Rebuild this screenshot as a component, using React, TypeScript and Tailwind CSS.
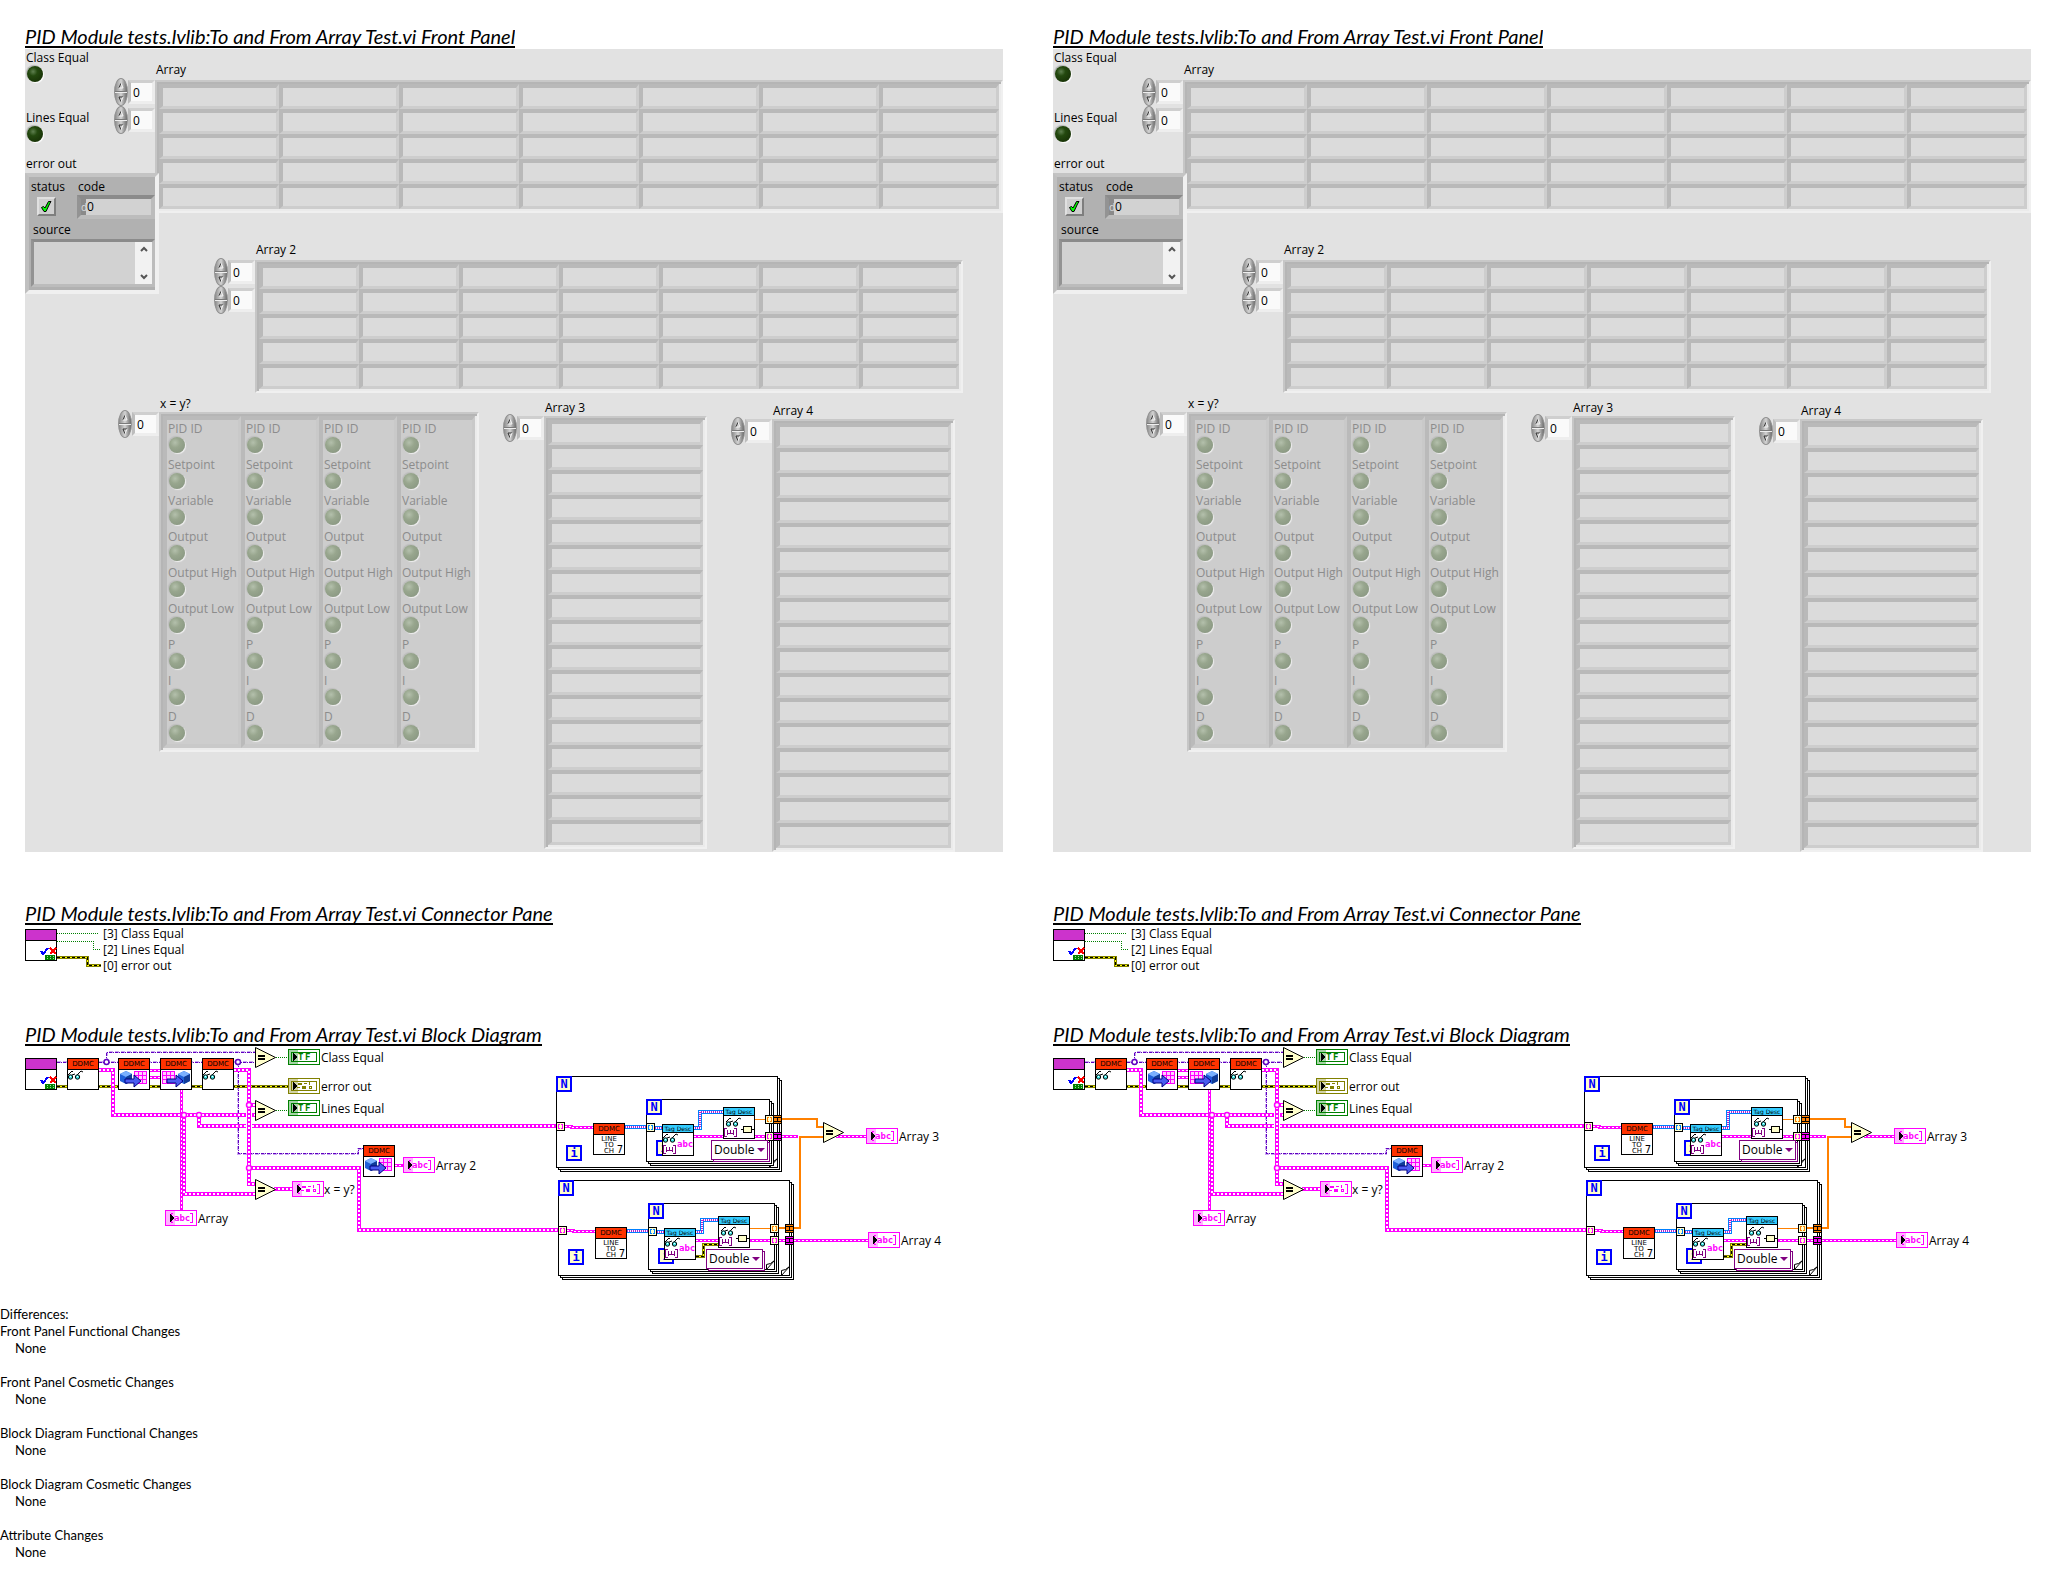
import React from "react";

const FIELDS = ["PID ID", "Setpoint", "Variable", "Output", "Output High", "Output Low", "P", "I", "D"];

const CHANGES = [
  "Front Panel Functional Changes",
  "Front Panel Cosmetic Changes",
  "Block Diagram Functional Changes",
  "Block Diagram Cosmetic Changes",
  "Attribute Changes",
];

const LABEL_FONT = '"Open Sans", "Noto Sans", sans-serif';
const PIXEL_FONT = '"DejaVu Sans", sans-serif';
const MONO_FONT = '"DejaVu Sans Mono", monospace';

function Title({ children }: { children: React.ReactNode }) {
  return (
    <h2 className="block h-6 w-fit overflow-hidden border-b-2 border-black font-['Lato',sans-serif] text-xl leading-[25px] whitespace-nowrap text-black italic">
      {children}
    </h2>
  );
}

/* ---------- Front panel ---------- */

function Led({ dim = false }: { dim?: boolean }) {
  return (
    <span
      className={
        dim
          ? "ml-px block size-4 rounded-full bg-[radial-gradient(circle_at_38%_35%,#b4c0ac_0%,#98a68e_35%,#8c9a84_75%,#a3a89f_100%)] shadow-[1px_1px_1px_#f0f0f0,-1px_-1px_1px_#bcbcbc]"
          : "ml-px block size-4 rounded-full bg-[radial-gradient(circle_at_38%_35%,#5f8050_0%,#24490f_30%,#1a3608_70%,#4a5a42_100%)] shadow-[1px_1px_1px_#ffffff,-1px_-1px_1px_#b4b4b4]"
      }
    />
  );
}

function LabelledLed({ label, dim = false }: { label: string; dim?: boolean }) {
  return (
    <div className="pl-px">
      <div className={dim ? "h-4 leading-4 whitespace-nowrap text-[#8c8c8c]" : "h-4 leading-4 whitespace-nowrap"}>{label}</div>
      <Led dim={dim} />
    </div>
  );
}

function IndexControl({ name }: { name: string }) {
  return (
    <div className="flex h-7 w-[41px] items-center">
      <div className="flex h-7 w-3.5 flex-col overflow-hidden rounded-[50%] border border-[#909090] bg-linear-to-r from-[#8c8c8c] via-[#d4d4d4] to-[#6c6c6c]">
        <button aria-label={`Increase ${name}`} className="flex h-[13px] items-center justify-center border-b border-[#7a7a7a]">
          <svg width="6" height="7" viewBox="0 0 6 7" fill="none">
            <path d="M1 6 3 1" stroke="#333" />
            <path d="M3 1 5 6H1" stroke="#f4f4f4" />
          </svg>
        </button>
        <button aria-label={`Decrease ${name}`} className="flex h-[13px] items-center justify-center border-t border-[#efefef]">
          <svg width="6" height="7" viewBox="0 0 6 7" fill="none">
            <path d="M3 6 1 1H5" stroke="#333" />
            <path d="M5 1 3 6" stroke="#f4f4f4" />
          </svg>
        </button>
      </div>
      <input
        aria-label={name}
        defaultValue="0"
        className="h-6 w-[27px] border-[3px] border-t-[#cfcfcf] border-r-[#ececec] border-b-[#eeeeee] border-l-[#bdbdbd] bg-[#fafafa] pl-0.5 text-xs leading-4 text-black outline-none"
      />
    </div>
  );
}

const FRAME =
  "border-2 border-t-[#c8c8c8] border-l-[#c6c6c6] border-r-[#f0f0f0] border-b-[#f0f0f0] p-0.5 shadow-[inset_2px_2px_0_#b5b5b5,inset_-2px_-2px_0_#ebebeb]";

function CellTable({ rows, wide, label }: { rows: number; wide?: boolean; label: string }) {
  const cols = wide ? 7 : 1;
  return (
    <div className={FRAME}>
      <table className="block" aria-label={label}>
        <tbody className={wide ? "grid grid-cols-7" : "grid grid-cols-1"}>
          {Array.from({ length: rows }, (_, r) => (
            <tr key={r} className="contents">
              {Array.from({ length: cols }, (_, c) => (
                <td
                  key={c}
                  className="block h-[25px] border-4 border-r-[3px] border-b-[3px] border-t-[#b9b9b9] border-r-[#cdcdcd] border-b-[#cdcdcd] border-l-[#b9b9b9] bg-[#dbdbdb] p-0"
                />
              ))}
            </tr>
          ))}
        </tbody>
      </table>
    </div>
  );
}

function IndexedArray({
  label,
  indices = 1,
  tight = false,
  className = "",
  bodyClass = "",
  children,
}: {
  label: string;
  indices?: number;
  tight?: boolean;
  className?: string;
  bodyClass?: string;
  children: React.ReactNode;
}) {
  return (
    <section className={`flex ${className}`}>
      <div className="mt-4 shrink-0">
        {Array.from({ length: indices }, (_, i) => (
          <IndexControl key={i} name={`${label} index ${i + 1}`} />
        ))}
      </div>
      <div className={bodyClass}>
        <div className={tight ? "mt-0.5 h-4 pl-px leading-4 whitespace-nowrap" : "mb-0.5 h-4 pl-px leading-4 whitespace-nowrap"}>
          {label}
        </div>
        {children}
      </div>
    </section>
  );
}

function ErrorCluster() {
  return (
    <div className="h-[121px] border-4 border-t-[#c4c4c4] border-r-[#f0f0f0] border-b-[#f0f0f0] border-l-[#c0c0c0] bg-[#b1b1b1] px-0.5 pt-0.5">
      <div className="flex">
        <div className="w-[46px]">
          <div className="h-[18px] leading-4">status</div>
          <div className="ml-1.5 flex size-[19px] items-center justify-center border-2 border-t-[#e0e0e0] border-r-[#7e7e7e] border-b-[#7e7e7e] border-l-[#e0e0e0] bg-[#cfcfcf]">
            <svg width="13" height="13" viewBox="0 0 13 13" role="img" aria-label="No error">
              <path d="M1.500 7.500 3.500 6.500 5 8 8.500 1.500 11 1.500 9.500 4 6 11.500 4 11.500z" fill="#00ff00" stroke="#000" strokeWidth="1" />
            </svg>
          </div>
        </div>
        <div className="-mr-0.5 flex-1">
          <div className="h-4 pl-px leading-4">code</div>
          <div className="flex h-6 items-stretch border-4 border-t-[#8b8b8b] border-r-[#bcbcbc] border-b-[#bcbcbc] border-l-[#939393] bg-[#d2d2d2] leading-4">
            <span className="w-[5px] overflow-hidden bg-[#8a8a8a] text-[10px] text-[#dddddd]">d</span>
            <span className="pl-px text-xs leading-4">0</span>
          </div>
        </div>
      </div>
      <div className="mt-[3px] h-[17px] pl-0.5 leading-4">source</div>
      <div className="-mr-0.5 flex h-12 justify-end border-[3px] border-t-[#8b8b8b] border-r-[#bcbcbc] border-b-[#bcbcbc] border-l-[#939393] bg-[#d2d2d2]">
        <div className="flex w-[17px] flex-col items-center justify-between bg-[#f2f2f2] py-1">
          <svg width="8" height="6" viewBox="0 0 8 6" fill="none" stroke="#555" strokeWidth="2">
            <path d="M1 5 4 2 7 5" />
          </svg>
          <svg width="8" height="6" viewBox="0 0 8 6" fill="none" stroke="#555" strokeWidth="2">
            <path d="M1 1 4 4 7 1" />
          </svg>
        </div>
      </div>
    </div>
  );
}

function FrontPanel() {
  return (
    <div className="mt-px mb-[49px] bg-[#e2e2e2]">
      <div className="flex items-start">
        <div className="relative z-10 w-[134px] shrink-0 pt-px">
          <div className="flex w-[70px] flex-col gap-7">
            <LabelledLed label="Class Equal" />
            <LabelledLed label="Lines Equal" />
          </div>
          <div className="mt-3.5 mb-px h-4 pl-px leading-4">error out</div>
          <ErrorCluster />
        </div>
        <div className="-ml-[45px] flex min-w-0 flex-1 flex-col gap-[29px] pt-[13px]">
          <IndexedArray label="Array" indices={2} bodyClass="min-w-0 flex-1">
            <CellTable rows={5} wide label="Array" />
          </IndexedArray>
          <IndexedArray label="Array 2" indices={2} className="mr-10 ml-[100px]" bodyClass="min-w-0 flex-1">
            <CellTable rows={5} wide label="Array 2" />
          </IndexedArray>
        </div>
      </div>
      <div className="flex items-start gap-6 pl-[93px]">
        <IndexedArray label="x = y?" tight className="pt-px" bodyClass="w-80">
          <div className={`grid grid-cols-4 ${FRAME}`}>
            {[0, 1, 2, 3].map((n) => (
              <div
                key={n}
                className="h-[332px] border-4 border-r-[3px] border-t-[#bababa] border-r-[#c9c9c9] border-b-[#c9c9c9] border-l-[#bababa] bg-[#cdcdcd] pt-px"
              >
                <div className="flex flex-col gap-1">
                  {FIELDS.map((f) => (
                    <LabelledLed key={f} label={f} dim />
                  ))}
                </div>
              </div>
            ))}
          </div>
        </IndexedArray>
        <IndexedArray label="Array 3" tight className="pt-[5px]" bodyClass="w-[163px]">
          <CellTable rows={17} label="Array 3" />
        </IndexedArray>
        <IndexedArray label="Array 4" tight className="pt-2" bodyClass="w-[183px]">
          <CellTable rows={17} label="Array 4" />
        </IndexedArray>
      </div>
    </div>
  );
}

/* ---------- Shared diagram drawing parts ---------- */

function TestIcon({ x, y }: { x: number; y: number }) {
  return (
    <g>
      <rect x={x + 0.5} y={y + 0.5} width="31" height="31" fill="#fff" stroke="#000" />
      <rect x={x + 1} y={y + 1} width="30" height="10" fill="#cc33cc" />
      <path d={`M${x} ${y + 11.5}h32`} stroke="#000" />
      <path d={`M${x + 16} ${y + 22}l2 3 5-6`} fill="none" stroke="#0000ff" strokeWidth="2" />
      <path d={`M${x + 25} ${y + 19}l6 6m0-6l-6 6`} stroke="#ff0000" strokeWidth="2" />
      <rect x={x + 20} y={y + 26} width="10" height="5" fill="#008000" />
      <path d={`M${x + 22} ${y + 27.5}h7M${x + 22} ${y + 29.5}h7`} stroke="#9adf9a" strokeDasharray="1 2" />
    </g>
  );
}

function ErrorWire({ d }: { d: string }) {
  return (
    <g fill="none">
      <path d={d} stroke="#808000" strokeWidth="3" />
      <path d={d} stroke="#ffff00" strokeWidth="1" />
      <path d={d} stroke="#000000" strokeWidth="1" strokeDasharray="3 2" />
    </g>
  );
}

function ClusterWire({ d }: { d: string }) {
  return (
    <g fill="none">
      <path d={d} stroke="#ff00ff" strokeWidth="4" />
      <path d={d} stroke="#ffffff" strokeWidth="2" strokeDasharray="2 2" />
    </g>
  );
}

function StringWire({ d }: { d: string }) {
  return (
    <g fill="none">
      <path d={d} stroke="#ff00ff" strokeWidth="3" />
      <path d={d} stroke="#ffffff" strokeWidth="1" strokeDasharray="2 2" />
    </g>
  );
}

function ClassWire({ d }: { d: string }) {
  return (
    <g fill="none">
      <path d={d} stroke="#c9a8f0" strokeWidth="2" strokeDasharray="4 2" />
      <path d={d} stroke="#6000c0" strokeWidth="1" strokeDasharray="3 1 1 1" />
    </g>
  );
}

function TagWire({ d }: { d: string }) {
  return (
    <g fill="none">
      <path d={d} stroke="#0080ff" strokeWidth="4" />
      <path d={d} stroke="#ffffff" strokeWidth="2" />
      <path d={d} stroke="#b020d0" strokeWidth="2" strokeDasharray="1 1" />
    </g>
  );
}

function Glasses({ x, y }: { x: number; y: number }) {
  return (
    <g fill="none" stroke="#000" shapeRendering="auto">
      <path d={`M${x} ${y + 6}l4-4 1 1M${x + 9} ${y + 6}l4-4 2 1M${x + 4} ${y + 6}l3-1`} />
      <circle cx={x + 2.5} cy={y + 8} r="2.2" fill="#40e0e0" />
      <circle cx={x + 9.5} cy={y + 8} r="2.2" fill="#40e0e0" />
      <path d={`M${x + 2} ${y + 7.500}h1M${x + 9} ${y + 7.500}h1`} stroke="#fff" />
    </g>
  );
}

function Node({ x, y, title, tag = false, children }: { x: number; y: number; title: string; tag?: boolean; children?: React.ReactNode }) {
  const head = tag ? 8 : 11;
  return (
    <g>
      <rect x={x + 0.5} y={y + 0.5} width="31" height="31" fill="#fff" stroke="#000" />
      <rect x={x + 1} y={y + 1} width="30" height={head - 1} fill={tag ? "#33ccff" : "#ff3300"} />
      <path d={`M${x} ${y + head + 0.5}h32`} stroke="#000" />
      <text x={x + 16} y={y + (tag ? 7 : 8)} textAnchor="middle" fontFamily={PIXEL_FONT} fontSize={tag ? 6 : 7} fill="#000">
        {title}
      </text>
      {children}
    </g>
  );
}

function Cube({ x, y }: { x: number; y: number }) {
  return (
    <g shapeRendering="auto">
      <path d={`M${x} ${y + 3}l6-3 6 3v7l-6 3-6-3z`} fill="#2060d8" />
      <path d={`M${x} ${y + 3}l6-3 6 3-6 3z`} fill="#7ab0ff" />
      <path d={`M${x + 6} ${y + 6}l6-3v7l-6 3z`} fill="#103c98" />
    </g>
  );
}

function GridIcon({ x, y }: { x: number; y: number }) {
  return (
    <path
      d={`M${x + 0.5} ${y + 0.5}h12v12h-12zM${x + 4.5} ${y}v13M${x + 8.5} ${y}v13M${x} ${y + 4.5}h13M${x} ${y + 8.5}h13`}
      fill="#ffccff"
      stroke="#ff00ff"
    />
  );
}

function BlueArrow({ x, y }: { x: number; y: number }) {
  return (
    <path
      d={`M${x} ${y + 4}h9v-4l7 6-7 6v-4h-9z`}
      fill="#4a5cf0"
      stroke="#000080"
      shapeRendering="auto"
    />
  );
}

function ToArrayNode({ x, y }: { x: number; y: number }) {
  return (
    <Node x={x} y={y} title="DDMC">
      <Cube x={x + 2} y={y + 13} />
      <GridIcon x={x + 16} y={y + 13} />
      <BlueArrow x={x + 7} y={y + 17} />
    </Node>
  );
}

function FromArrayNode({ x, y }: { x: number; y: number }) {
  return (
    <Node x={x} y={y} title="DDMC">
      <GridIcon x={x + 2} y={y + 13} />
      <Cube x={x + 18} y={y + 13} />
      <BlueArrow x={x + 7} y={y + 17} />
    </Node>
  );
}

function LineNode({ x, y }: { x: number; y: number }) {
  return (
    <Node x={x} y={y} title="DDMC">
      <g fontFamily={PIXEL_FONT} fontSize="7" textAnchor="middle" fill="#000">
        <text x={x + 16} y={y + 18}>LINE</text>
        <text x={x + 16} y={y + 24}>TO</text>
        <text x={x + 16} y={y + 30}>CH</text>
        <text x={x + 27} y={y + 30} fontSize="10">7</text>
      </g>
    </Node>
  );
}

function ArrayMark({ x, y }: { x: number; y: number }) {
  return (
    <path
      d={`M${x + 3} ${y + 0.5}h-2.500v8h2.500M${x + 10} ${y + 0.5}h2.500v8h-2.500M${x + 3.5} ${y + 2}v5M${x + 9.5} ${y + 2}v5M${x + 3} ${y + 5.5}h7M${x + 6.5} ${y + 2}v4`}
      fill="none"
      stroke="#800080"
    />
  );
}

function TagTextNode({ x, y }: { x: number; y: number }) {
  return (
    <Node x={x} y={y} title="Tag Desc" tag>
      <Glasses x={x + 1} y={y + 8} />
      <text x={x + 15} y={y + 23} fontFamily={MONO_FONT} fontSize="9" fontWeight="bold" fill="#ff00ff">
        abc
      </text>
      <ArrayMark x={x + 1} y={y + 21} />
    </Node>
  );
}

function TagValueNode({ x, y }: { x: number; y: number }) {
  return (
    <Node x={x} y={y} title="Tag Desc" tag>
      <Glasses x={x + 3} y={y + 9} />
      <ArrayMark x={x + 1} y={y + 21} />
      <rect x={x + 20.5} y={y + 19.5} width="8" height="6" fill="#ffffcc" stroke="#000" />
      <path d={`M${x + 18} ${y + 22.5}h2M${x + 29} ${y + 22.5}h2`} stroke="#000" />
    </Node>
  );
}

function Equals({ x, y }: { x: number; y: number }) {
  return (
    <g>
      <path d={`M${x + 0.5} ${y + 0.5}v20l20-10z`} fill="#ffffcc" stroke="#000" shapeRendering="auto" />
      <path d={`M${x + 3} ${y + 9}h7M${x + 3} ${y + 12}h7`} stroke="#000" strokeWidth="2" />
    </g>
  );
}

function Terminal({ x, y, kind }: { x: number; y: number; kind: "bool" | "error" | "text" | "cluster" }) {
  const stroke = kind === "bool" ? "#008000" : kind === "error" ? "#808000" : "#ff00ff";
  const tint = kind === "bool" ? "#a6d3a6" : kind === "error" ? "#d3d3a6" : "#ffb3ff";
  const boxed = kind === "bool" || kind === "error";
  return (
    <g>
      <rect x={x + 0.5} y={y + 0.5} width="31" height="15" fill="#fff" stroke={stroke} />
      <rect x={x + 1} y={y + 1} width="9" height="14" fill={tint} />
      {boxed && <rect x={x + 3.5} y={y + 3.5} width="25" height="9" fill="none" stroke={stroke} />}
      {kind === "bool" && (
        <g fontFamily={MONO_FONT} fontSize="9" fontWeight="bold" fill={stroke}>
          <text x={x + 10} y={y + 11}>T</text>
          <text x={x + 17} y={y + 11}>F</text>
        </g>
      )}
      {kind === "text" && (
        <text x={x + 9} y={y + 11} fontFamily={MONO_FONT} fontSize="9" fontWeight="bold" fill={stroke}>
          abc
        </text>
      )}
      {(kind === "error" || kind === "cluster") && (
        <g fill={stroke}>
          <rect x={x + 10} y={y + 5} width="4" height="2" />
          <rect x={x + 9} y={y + 9} width="3" height="1" />
          <rect x={x + 14} y={y + 8} width="4" height="3" />
          <rect x={x + 16} y={y + 5} width="3" height="1" />
          <rect x={x + 21} y={y + 4} width="1" height="3" />
          <rect x={x + 21.5} y={y + 8.5} width="2" height="2" fill="none" stroke={stroke} />
        </g>
      )}
      {!boxed && <path d={`M${x + 8} ${y + 3.5}h-2v9h2M${x + 25} ${y + 3.5}h2v9h-2`} fill="none" stroke={stroke} />}
      <path d={`M${x + 5} ${y + 4}l4 4-4 4z`} fill="#000" />
    </g>
  );
}

function Letter({ x, y, children }: { x: number; y: number; children: string }) {
  return (
    <g>
      <rect x={x + 1} y={y + 1} width="14" height="14" fill="#ffffcc" stroke="#0000ff" strokeWidth="2" />
      <text x={x + 8} y={y + 12} textAnchor="middle" fontFamily={MONO_FONT} fontSize="12" fontWeight="bold" fill="#0000ff" stroke="none">
        {children}
      </text>
    </g>
  );
}

function Loop({ x, y, w, h }: { x: number; y: number; w: number; h: number }) {
  return (
    <g stroke="#000" fill="#fff">
      <rect x={x + 4.5} y={y + 4.5} width={w} height={h} />
      <rect x={x + 2.5} y={y + 2.5} width={w} height={h} />
      <rect x={x + 0.5} y={y + 0.5} width={w} height={h} />
      <path d={`M${x + w - 7.5} ${y + h + 0.5}v-5l4-1 4-3z`} shapeRendering="auto" />
      <Letter x={x} y={y}>N</Letter>
    </g>
  );
}

function Tunnel({ x, y, color, solid = false }: { x: number; y: number; color: string; solid?: boolean }) {
  return (
    <g>
      <rect x={x + 0.5} y={y + 0.5} width="8" height="8" fill={solid ? color : "#ffffcc"} stroke="#000" />
      {solid ? (
        <path d={`M${x} ${y + 2.5}h9M${x} ${y + 6.5}h9M${x + 4.5} ${y + 2}v5`} stroke="#000" />
      ) : (
        <path d={`M${x + 4} ${y + 2.5}h-1.500v4h1.500M${x + 5} ${y + 2.5}h1.500v4h-1.500`} fill="none" stroke={color} />
      )}
    </g>
  );
}

function Junction({ x, y, color = "#ff00ff" }: { x: number; y: number; color?: string }) {
  return <circle cx={x} cy={y} r="2.5" fill="#fff" stroke={color} strokeWidth="1.5" shapeRendering="auto" />;
}

/* ---------- Connector pane ---------- */

function ConnectorPane() {
  return (
    <div className="mt-px mb-12 flex items-start">
      <svg width="78" height="48" viewBox="0 0 78 48" shapeRendering="crispEdges" aria-hidden="true">
        <path d="M32 7.5h42M32 15.5h36.5v8h6" fill="none" stroke="#008000" strokeDasharray="1 1" />
        <ErrorWire d="M32 31.5h30.5v8h13" />
        <TestIcon x={0} y={3} />
      </svg>
      <ul className="leading-4">
        {[
          ["[3]", "Class Equal"],
          ["[2]", "Lines Equal"],
          ["[0]", "error out"],
        ].map(([n, t]) => (
          <li key={n} className="flex h-4">
            <span className="w-[18px]">{n}</span>
            <span>{t}</span>
          </li>
        ))}
      </ul>
    </div>
  );
}

/* ---------- Block diagram ---------- */

const DIAGRAM_LABELS: [string, number, number][] = [
  ["Class Equal", 321, 1062],
  ["error out", 321, 1091],
  ["Lines Equal", 321, 1113],
  ["Array 2", 436, 1170],
  ["x = y?", 324, 1194],
  ["Array", 198, 1223],
  ["Array 3", 899, 1141],
  ["Array 4", 901, 1245],
];

function TypeSelect({ name, className }: { name: string; className: string }) {
  return (
    <div className={`absolute flex h-5 w-[57px] items-center ${className}`}>
      <select
        aria-label={name}
        className="h-5 w-full appearance-none border border-[#800080] bg-white pl-0.5 text-xs leading-4 text-black shadow-[2px_2px_0_-1px_#fff,2px_2px_0_0_#800080]"
      >
        <option>Double</option>
      </select>
      <svg width="8" height="4" viewBox="0 0 8 4" className="pointer-events-none absolute right-[3px]" aria-hidden="true">
        <path d="M0 0h8L4 4z" fill="#800080" />
      </svg>
    </div>
  );
}

function BlockDiagram({ side }: { side: string }) {
  return (
    <div className="relative">
      <svg width="960" height="240" viewBox="25 1046 960 240" shapeRendering="crispEdges" className="block" role="img" aria-label="Block diagram">
        {/* object wires */}
        <ClassWire d="M57 1062h198" />
        <ClassWire d="M106.500 1062v-10h149" />
        <ClassWire d="M238 1062v91.500h120v-5h5" />
        <path d="M276 1057.500h12M276 1110.500h12" stroke="#008000" strokeDasharray="1 1" />
        {/* error wires */}
        <ErrorWire d="M57 1086.500h231" />
        {/* cluster wires */}
        <ClusterWire d="M99 1070h14v45h142" />
        <ClusterWire d="M184 1115v79h71" />
        <ClusterWire d="M199 1115v11h357" />
        <rect x="246" y="1112" width="6" height="18" fill="#fff" />
        <ClusterWire d="M234 1070h15v114h6" />
        <ClusterWire d="M249 1105h6" />
        <ClusterWire d="M249 1168h110v62h199" />
        <ClusterWire d="M274 1189h18" />
        <StringWire d="M181.500 1090v120" />
        <StringWire d="M150 1070.500h10M150 1077.500h10" />
        <StringWire d="M395 1165.500h8" />
        <Junction x={184} y={1115} />
        <Junction x={199} y={1115} />
        <Junction x={249} y={1105} />
        <Junction x={249} y={1168} />
        <Junction x={106.5} y={1062} color="#6000c0" />
        <Junction x={238} y={1062} color="#6000c0" />

        <TestIcon x={25} y={1058} />
        <Node x={67} y={1058} title="DDMC">
          <Glasses x={68} y={1069} />
        </Node>
        <ToArrayNode x={118} y={1058} />
        <FromArrayNode x={160} y={1058} />
        <Node x={202} y={1058} title="DDMC">
          <Glasses x={203} y={1069} />
        </Node>
        <Equals x={255} y={1047} />
        <Equals x={255} y={1100} />
        <Equals x={255} y={1179} />
        <ToArrayNode x={363} y={1145} />
        <Terminal x={288} y={1049} kind="bool" />
        <Terminal x={288} y={1078} kind="error" />
        <Terminal x={288} y={1100} kind="bool" />
        <Terminal x={292} y={1181} kind="cluster" />
        <Terminal x={403} y={1157} kind="text" />
        <Terminal x={165} y={1210} kind="text" />

        {/* upper loop */}
        <Loop x={556} y={1076} w={221} h={91} />
        <Letter x={566} y={1145}>i</Letter>
        <Loop x={646} y={1099} w={123} h={62} />
        <Letter x={656} y={1140}>i</Letter>
        <StringWire d="M565 1126.500h6v1h22" />
        <LineNode x={593} y={1123} />
        <TagWire d="M625 1127h22" />
        <TagWire d="M655 1128h45v-16h23" />
        <StringWire d="M694 1136.500h72" />
        <path d="M755 1119.500h12" stroke="#ff8000" />
        <TagTextNode x={662} y={1124} />
        <TagValueNode x={723} y={1107} />
        <Tunnel x={556} y={1122} color="#ff00ff" />
        <Tunnel x={646} y={1123} color="#0080ff" />
        <Tunnel x={765} y={1115} color="#ff8000" />
        <Tunnel x={765} y={1132} color="#ff00ff" />
        <Tunnel x={773} y={1115} color="#ff8000" solid />
        <Tunnel x={773} y={1132} color="#ff00ff" solid />

        {/* lower loop */}
        <Loop x={558} y={1180} w={231} h={95} />
        <Letter x={568} y={1249}>i</Letter>
        <Loop x={648} y={1203} w={126} h={66} />
        <Letter x={658} y={1248}>i</Letter>
        <StringWire d="M567 1230.500h6v1h22" />
        <LineNode x={595} y={1227} />
        <TagWire d="M627 1231h22" />
        <TagWire d="M657 1232h45v-12h16" />
        <StringWire d="M696 1240.500h75" />
        <ErrorWire d="M696 1256.500h7.500v-12h15" />
        <path d="M750 1228.500h21" stroke="#ff8000" />
        <TagTextNode x={664} y={1228} />
        <TagValueNode x={718} y={1216} />
        <Tunnel x={558} y={1226} color="#ff00ff" />
        <Tunnel x={648} y={1227} color="#0080ff" />
        <path d="M779 1228h6" stroke="#ff8000" strokeWidth="2" />
        <StringWire d="M779 1240.500h7" />
        <Tunnel x={770} y={1224} color="#ff8000" />
        <Tunnel x={770} y={1236} color="#ff00ff" />
        <Tunnel x={785} y={1224} color="#ff8000" solid />
        <Tunnel x={785} y={1236} color="#ff00ff" solid />

        {/* outputs */}
        <path d="M782 1119h35v8h7M794 1228h6v-91h24" fill="none" stroke="#ff8000" strokeWidth="2" />
        <StringWire d="M782 1136.500h16M836 1136.500h30M794 1240.500h74" />
        <Equals x={823} y={1122} />
        <Terminal x={866} y={1128} kind="text" />
        <Terminal x={868} y={1232} kind="text" />

        <g fontFamily={LABEL_FONT} fontSize="12" fill="#000">
          {DIAGRAM_LABELS.map(([t, x, y]) => (
            <text key={t} x={x} y={y}>
              {t}
            </text>
          ))}
        </g>
      </svg>
      <TypeSelect name={`${side} type of Array 3 values`} className="top-[94px] left-[686px]" />
      <TypeSelect name={`${side} type of Array 4 values`} className="top-[203px] left-[681px]" />
    </div>
  );
}

function Report({ side }: { side: string }) {
  const vi = "PID Module tests.lvlib:To and From Array Test.vi";
  return (
    <article className="min-w-0 pr-[25px] pl-[25px]">
      <Title>{vi} Front Panel</Title>
      <FrontPanel />
      <Title>{vi} Connector Pane</Title>
      <ConnectorPane />
      <Title>{vi} Block Diagram</Title>
      <BlockDiagram side={side} />
    </article>
  );
}

export default function App() {
  return (
    <main className="min-h-screen bg-white pt-6 font-['Open_Sans','Noto_Sans',sans-serif] text-xs text-black">
      <div className="grid grid-cols-2">
        <Report side="First" />
        <Report side="Second" />
      </div>
      <section className="mt-5 font-['Lato',sans-serif] text-[13px] leading-[17px]">
        <h2>Differences:</h2>
        <dl className="flex flex-col gap-[17px]">
          {CHANGES.map((c) => (
            <div key={c}>
              <dt>{c}</dt>
              <dd className="pl-[15px]">None</dd>
            </div>
          ))}
        </dl>
      </section>
    </main>
  );
}
